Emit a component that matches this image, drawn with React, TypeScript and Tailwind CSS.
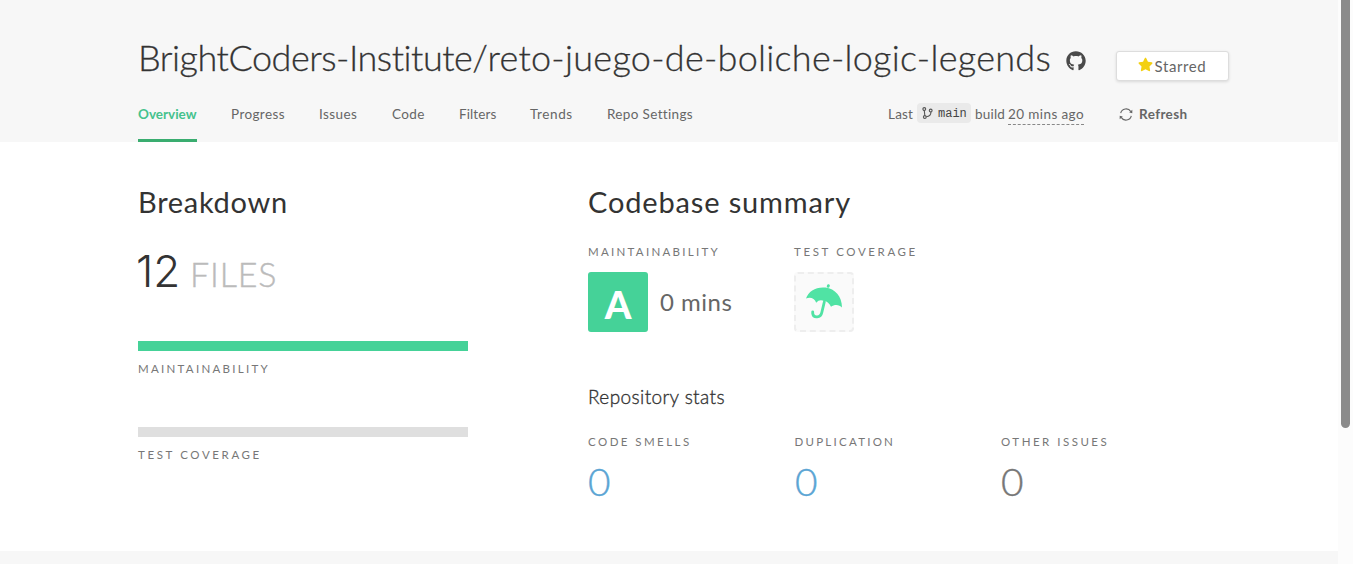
import type { ReactNode } from "react";
import { FaGithub, FaStar } from "react-icons/fa";

const tabs = [
  { name: "Progress", width: "w-[54px]", tracking: "tracking-[0.4px]" },
  { name: "Issues", width: "w-[39px]", tracking: "tracking-[0.4px]" },
  { name: "Code", width: "w-[33px]", tracking: "tracking-[0.4px]" },
  { name: "Filters", width: "w-[37px]", tracking: "tracking-[0.1px]" },
  { name: "Trends", width: "w-[43px]", tracking: "tracking-[0.6px]" },
  { name: "Repo Settings", width: "w-[87px]", tracking: "tracking-[0.35px]" },
];

function Label({ children, tracking }: { children: ReactNode; tracking: string }) {
  return (
    <div className={`h-4 whitespace-nowrap text-[11.5px] leading-4 text-[#777] ${tracking}`}>{children}</div>
  );
}

function Bar({ label, color, tracking }: { label: string; color: string; tracking: string }) {
  return (
    <div>
      <div className={`mb-[10px] h-[10px] w-[330px] ${color}`} />
      <Label tracking={tracking}>{label}</Label>
    </div>
  );
}

function Stat({ label, color, tracking }: { label: string; color: string; tracking: string }) {
  return (
    <div className="w-[206.5px]">
      <Label tracking={tracking}>{label}</Label>
      <div className={`mt-[10px] text-[37px] leading-[44px] font-light [-webkit-text-stroke:0.4px] ${color}`}>
        <span className="inline-block origin-left scale-x-105">0</span>
      </div>
    </div>
  );
}

function BranchIcon() {
  return (
    <svg className="h-[12px] w-[11px]" viewBox="0 0 11 12" fill="none" stroke="#555" strokeWidth="1.1">
      <circle cx="2.3" cy="2" r="1.4" />
      <circle cx="2.8" cy="10" r="1.4" />
      <circle cx="8.7" cy="3.5" r="1.4" />
      <path d="M2.3 3.4 2.8 8.600M8.900 5C9 8 6.500 9.500 4.200 9.800" />
    </svg>
  );
}

function RefreshIcon() {
  return (
    <svg className="h-[13px] w-[14px]" viewBox="0 0 14 13" fill="none" stroke="#666" strokeWidth="1.1">
      <path d="M1.700 5.200A5.500 5.500 0 0 1 11.800 3.600M12.300 7.800A5.500 5.500 0 0 1 2.200 9.400" />
      <path d="M13.300 1.800v3.400L10.200 4.600zM.7 11.200V7.800l3.100.6z" fill="#666" stroke="none" />
    </svg>
  );
}

function Umbrella() {
  return (
    <svg className="h-[36px] w-[38px]" viewBox="0 0 38 36" fill="none">
      <path
        d="M1 14.600C3.500 7 11 2.700 20.500 3.600 30 4.800 37 12.500 37 23.500 34.500 20.500 29.500 20 26 22.800 24.500 19 21.500 17 19.300 17.200 16.500 15.500 13.500 15.800 11.200 18.700 9.500 14 5 12.500 1 14.600Z"
        fill="#50e3a4"
      />
      <path d="M23.400 1.700 23.200 2.400" stroke="#50e3a4" strokeWidth="2.800" strokeLinecap="round" />
      <path
        d="M19.300 18 16.800 28.500C15.700 34 8.500 34.500 7.700 29.500V27.800"
        stroke="#50e3a4"
        strokeWidth="2.800"
        strokeLinecap="round"
      />
    </svg>
  );
}

export default function App() {
  return (
    <div className="flex h-[564px] w-[1353px] overflow-hidden bg-white font-['Lato',sans-serif]">
      <div className="flex w-[1338px] flex-col">
        <header className="h-[142px] bg-[#f7f7f7] pl-[138px] pt-[35px]">
          <div className="flex h-[47px]">
            <h1 className="w-[928px] whitespace-nowrap text-[36px] leading-[44px] font-light text-[#333] [-webkit-text-stroke:0.3px]">
              <span className="tracking-[-0.48px]">BrightCoders-Institute/</span>
              <span className="tracking-[0.280px]">reto-juego-de-boliche-logic-legends</span>
            </h1>
            <FaGithub className="mt-[16px] size-[20px] text-[#4a4a4a]" />
            <button className="ml-[30px] mt-[16px] flex h-[30px] w-[113px] items-center justify-center rounded-[3px] border border-[#ddd] bg-white pr-px text-[15px] text-[#666] shadow-[0_1px_3px_rgba(0,0,0,0.12)]">
              <FaStar className="mb-[4px] mr-[2px] size-[15px] text-[#f3d011]" />
              <span className="tracking-[0.6px]">Starred</span>
            </button>
          </div>
          <div className="flex h-[60px] text-[13.5px] text-[#666]">
            <nav className="flex w-[750px] gap-[34px] whitespace-nowrap leading-[64px]">
              <a className="w-[59px] border-b-[3px] border-[#3aad70] font-bold text-[#45c28d]">Overview</a>
              {tabs.map((t) => (
                <a key={t.name} className={`${t.width} ${t.tracking}`}>
                  {t.name}
                </a>
              ))}
            </nav>
            <div className="flex h-[64px] items-center whitespace-nowrap">
              <span className="w-[29px] pt-px tracking-[0.2px]">Last</span>
              <span className="mb-[2px] flex h-[20px] w-[54px] items-center gap-[5px] rounded-[4px] bg-[#eaeaea] pl-[5px] font-['Liberation_Mono',monospace] text-[12px] text-[#444]">
                <BranchIcon />
                <span className="pt-[2px]">main</span>
              </span>
              <span className="ml-[4px] w-[33px] pt-px tracking-[0.2px]">build</span>
              <span className="w-[76px] border-b border-dashed border-[#888] leading-[20px] tracking-[0.4px]">20 mins ago</span>
              <span className="ml-[35px] mr-[6px]">
                <RefreshIcon />
              </span>
              <span className="pt-px font-bold tracking-[0.4px]">Refresh</span>
            </div>
          </div>
        </header>

        <main className="flex h-[409px] pl-[138px] pt-[42px]">
          <section className="w-[450px]">
            <h2 className="text-[29px] leading-[36px] tracking-[0.7px] text-[#333]">Breakdown</h2>
            <div className="mt-[23px] flex h-[56px] items-baseline leading-[56px] font-light">
              <span className="-ml-[2px] w-[54px] font-['Inter',sans-serif] text-[44px] tracking-[0px] text-[#333]">12</span>
              <span className="text-[34px] tracking-[0.8px] text-[#bbb] [-webkit-text-stroke:0.4px]">FILES</span>
            </div>
            <div className="mt-[42px] flex flex-col gap-[50px]">
              <Bar label="MAINTAINABILITY" color="bg-[#45d298]" tracking="tracking-[2.280px]" />
              <Bar label="TEST COVERAGE" color="bg-[#dfdfdf]" tracking="tracking-[2.620px]" />
            </div>
          </section>

          <section>
            <h2 className="text-[29px] leading-[36px] tracking-[0.85px] text-[#333]">Codebase summary</h2>
            <div className="mt-[24px] flex">
              <div className="w-[206px]">
                <Label tracking="tracking-[2.280px]">MAINTAINABILITY</Label>
                <div className="mt-[12px] flex items-center">
                  <div className="flex size-[60px] items-center justify-center rounded-[3px] bg-[#45d298] pt-[4px] text-[38px] font-black text-white">A</div>
                  <span className="ml-[12px] text-[24px] tracking-[0.5px] text-[#666]">0 mins</span>
                </div>
              </div>
              <div>
                <Label tracking="tracking-[2.620px]">TEST COVERAGE</Label>
                <div className="mt-[12px] flex size-[60px] items-center justify-center rounded-[4px] border-2 border-dashed border-[#eee] bg-[#fafafa]">
                  <Umbrella />
                </div>
              </div>
            </div>
            <h3 className="mt-[53px] text-[19px] leading-[24px] font-light tracking-[0.4px] text-[#333] [-webkit-text-stroke:0.35px]">Repository stats</h3>
            <div className="mt-[25px] flex">
              <Stat label="CODE SMELLS" color="text-[#5ba5d4]" tracking="tracking-[2.450px]" />
              <Stat label="DUPLICATION" color="text-[#5ba5d4]" tracking="tracking-[2.250px]" />
              <Stat label="OTHER ISSUES" color="text-[#777]" tracking="tracking-[2.500px]" />
            </div>
          </section>
        </main>
        <div className="h-[13px] bg-[#f7f7f7]" />
      </div>
      <div className="w-[15px] bg-[#fcfcfc] pl-[3px]">
        <div className="h-[428px] w-[9px] rounded-b-full bg-[#8b8b8b]" />
      </div>
    </div>
  );
}
